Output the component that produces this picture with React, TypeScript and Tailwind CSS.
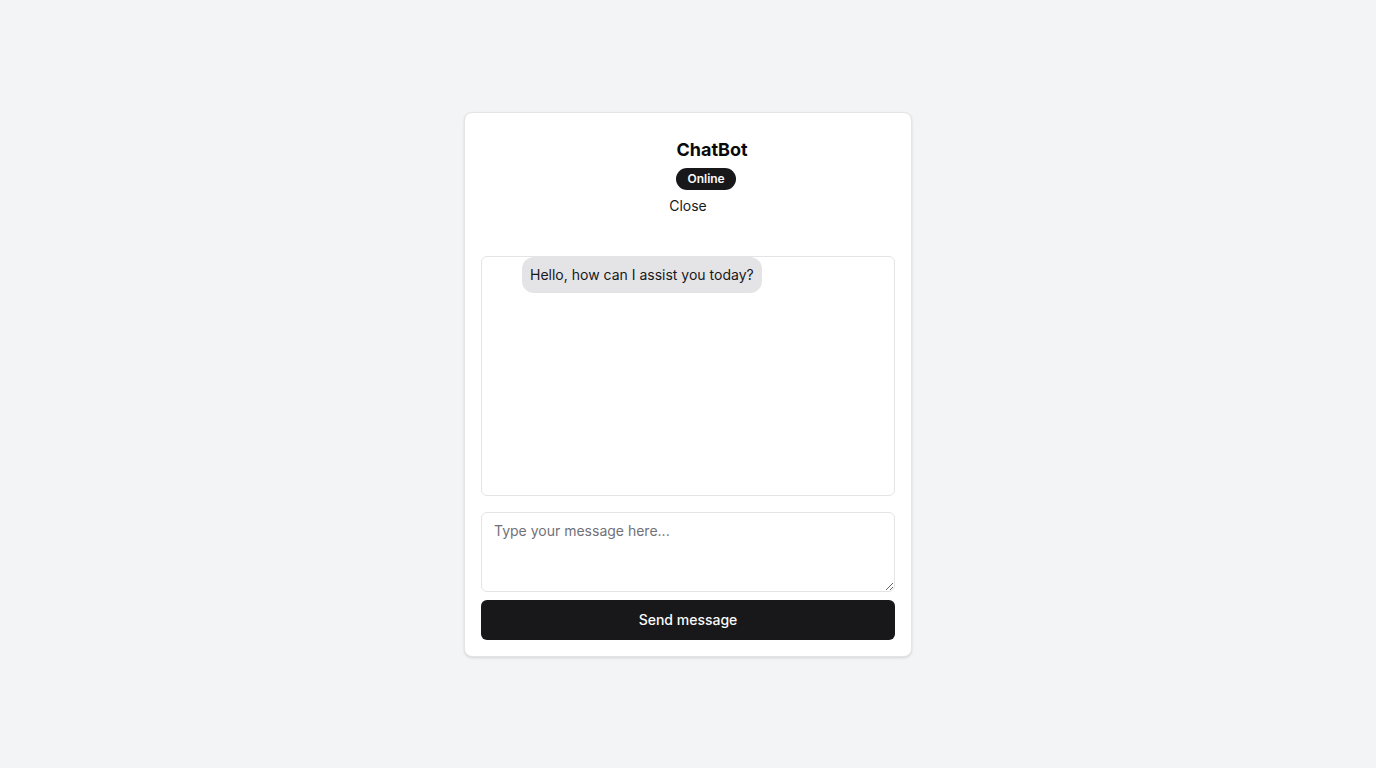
import React from "react";

export default function App() {
  return (
    <div
      className="min-h-screen w-full bg-[#f3f4f6] flex items-center justify-center"
      style={{ fontFamily: "Inter, 'Noto Sans', sans-serif" }}
    >
      <div className="w-[448px] bg-white border border-[#e4e4e7] rounded-lg shadow-sm flex flex-col">
        <div className="flex flex-col items-center pt-[23px] pb-10 px-4">
          <div className="flex items-start gap-2">
            <div className="w-10 h-10 shrink-0" />
            <div className="flex flex-col items-start gap-1">
              <h3 className="text-lg leading-7 font-bold text-[#09090b]">ChatBot</h3>
              <span className="inline-flex items-center rounded-full bg-[#18181b] text-[#fafafa] text-xs leading-4 font-semibold px-2.5 py-0.5 border border-transparent">
                Online
              </span>
            </div>
          </div>
          <button className="mt-1.5 text-sm leading-5 text-[#18181b] bg-transparent">Close</button>
        </div>
        <div className="flex flex-col px-4 pb-4">
          <div className="h-[240px] border border-[#e4e4e7] rounded-md overflow-y-auto">
            <div className="flex items-start gap-2">
              <div className="w-8 h-8 shrink-0" />
              <div className="rounded-xl bg-[#e4e4e7] px-2 py-2 text-sm leading-5 text-[#18181b]">
                Hello, how can I assist you today?
              </div>
            </div>
          </div>
          <textarea
            className="mt-4 h-20 w-full border border-[#e4e4e7] rounded-md px-3 py-2 text-sm leading-5 text-[#09090b] placeholder:text-[#71717a] bg-white outline-none"
            placeholder="Type your message here..."
          />
          <button className="mt-2 h-10 w-full rounded-md bg-[#18181b] text-[#fafafa] text-sm font-medium">
            Send message
          </button>
        </div>
      </div>
    </div>
  );
}
